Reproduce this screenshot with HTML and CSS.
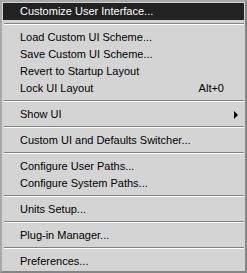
FILE: index.html
```html
<!DOCTYPE html>
<html>
<head>
<title>UI Menu</title>
<link rel="stylesheet" href="styles.css">
</head>
<body>
<div class="menu">
  <div class="item active"><span class="label">Customize User Interface...</span></div>
  <div class="sep"></div>
  <div class="item"><span class="label">Load Custom UI Scheme...</span></div>
  <div class="item"><span class="label">Save Custom UI Scheme...</span></div>
  <div class="item"><span class="label">Revert to Startup Layout</span></div>
  <div class="item"><span class="label">Lock UI Layout</span><span class="key">Alt+0</span></div>
  <div class="sep"></div>
  <div class="item"><span class="label">Show UI</span><span class="arrow"></span></div>
  <div class="sep"></div>
  <div class="item"><span class="label">Custom UI and Defaults Switcher...</span></div>
  <div class="sep"></div>
  <div class="item"><span class="label">Configure User Paths...</span></div>
  <div class="item"><span class="label">Configure System Paths...</span></div>
  <div class="sep"></div>
  <div class="item"><span class="label">Units Setup...</span></div>
  <div class="sep"></div>
  <div class="item"><span class="label">Plug-in Manager...</span></div>
  <div class="sep"></div>
  <div class="item"><span class="label">Preferences...</span></div>
</div>
</body>
</html>
```

FILE: styles.css
```css
body {
    margin: 0;
    background: #d4d4d4;
}
.menu {
    width: 247px;
    height: 273px;
    box-sizing: border-box;
    border: 2px solid #858585;
    border-top-color: #a8a8a8;
    border-left-color: #a8a8a8;
    padding: 1px;
    background: #d4d4d4;
    font-family: "Liberation Sans", Arial, sans-serif;
    font-size: 11px;
    color: #000;
}
.item {
    display: flex;
    align-items: center;
    height: 17px;
    line-height: 17px;
    padding: 0 6px 0 17px;
}
.item .label {
    flex: 1;
    white-space: nowrap;
}
.item.active {
    background: #222222;
    color: #fff;
}
.key {
    margin-right: 14px;
}
.arrow {
    width: 0;
    height: 0;
    border-top: 4px solid transparent;
    border-bottom: 4px solid transparent;
    border-left: 4px solid #000;
}
.sep {
    height: 2px;
    margin: 3px 0 4px 1px;
    border-top: 1px solid #808080;
    border-bottom: 1px solid #ffffff;
    box-sizing: border-box;
}
```
